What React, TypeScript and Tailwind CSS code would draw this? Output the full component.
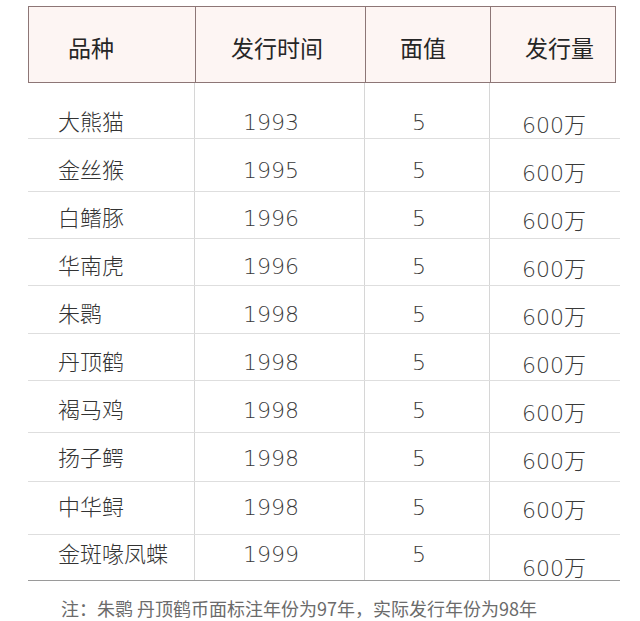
const rows = [
  { name: '大熊猫', year: '1993', h: 'h-[56px]', pt: 'pt-[28px]', lastPt: 'pt-[28px]' },
  { name: '金丝猴', year: '1995', h: 'h-[53px]', pt: 'pt-[20px]', lastPt: 'pt-[20px]' },
  { name: '白鳍豚', year: '1996', h: 'h-[47px]', pt: 'pt-[15px]', lastPt: 'pt-[15px]' },
  { name: '华南虎', year: '1996', h: 'h-[47px]', pt: 'pt-[16px]', lastPt: 'pt-[16px]' },
  { name: '朱鹮', year: '1998', h: 'h-[48px]', pt: 'pt-[17px]', lastPt: 'pt-[17px]' },
  { name: '丹顶鹤', year: '1998', h: 'h-[47px]', pt: 'pt-[17px]', lastPt: 'pt-[17px]' },
  { name: '褐马鸡', year: '1998', h: 'h-[52px]', pt: 'pt-[18px]', lastPt: 'pt-[18px]' },
  { name: '扬子鳄', year: '1998', h: 'h-[49px]', pt: 'pt-[14px]', lastPt: 'pt-[14px]' },
  { name: '中华鲟', year: '1998', h: 'h-[53px]', pt: 'pt-[14px]', lastPt: 'pt-[14px]' },
  { name: '金斑喙凤蝶', year: '1999', h: 'h-[46px]', pt: 'pt-[8px]', lastPt: 'pt-[19px]' },
];

const cjk = "font-['Noto_Sans_CJK_SC',sans-serif]";
const num = "font-['DejaVu_Sans','Noto_Sans_CJK_SC',sans-serif]";

export default function App() {
  return (
    <div className="h-[621px] w-[640px] overflow-hidden bg-white pt-[6px]">
      <div className="ml-[28px] grid h-[77px] w-[588px] grid-cols-[167px_170px_125px_124px] border border-[#8d7676] bg-[#fdf5f3] text-[23px] leading-none text-[#262626]">
        <div className={`${cjk} border-r border-[#8d7676] pl-[39px] pt-[29px]`}>品种</div>
        <div className={`${cjk} border-r border-[#8d7676] pl-[35px] pt-[29px]`}>发行时间</div>
        <div className={`${cjk} border-r border-[#8d7676] pl-[34px] pt-[29px]`}>面值</div>
        <div className={`${cjk} pl-[34px] pt-[29px]`}>发行量</div>
      </div>

      <div className="ml-[28px] w-[592px]">
        {rows.map((row, i) => {
          const last = i === rows.length - 1;
          return (
            <div
              key={row.name}
              className={`grid ${row.h} grid-cols-[167px_170px_125px_130px] border-b ${last ? 'border-[#9a9a9a]' : 'border-[#dedede]'} text-[22px] leading-none text-[#333]`}
            >
              <div className={`${cjk} ${row.pt} border-r border-[#d6d6d6] pl-[30px]`}>
                <span className="block -translate-y-[2px] font-light">{row.name}</span>
              </div>
              <div className={`${num} ${row.pt} border-r border-[#d6d6d6] pl-[48px] font-light text-[#3a3a3a]`}>
                <span className="block translate-y-[1px]">{row.year}</span>
              </div>
              <div className={`${num} ${row.pt} border-r border-[#d6d6d6] pl-[47px] font-light text-[#3a3a3a]`}>
                <span className="block translate-y-[1px]">5</span>
              </div>
              <div className={`${num} ${row.lastPt} pl-[32px] font-light text-[#3a3a3a]`}>
                <span className="block translate-y-[1px]">
                  600<span className={cjk}>万</span>
                </span>
              </div>
            </div>
          );
        })}
      </div>

      <p className={`${cjk} ml-[61px] mt-[18px] text-[18px] leading-none text-[#6b6b6b]`}>
        注：朱鹮 丹顶鹤币面标注年份为97年，实际发行年份为98年
      </p>
    </div>
  );
}
